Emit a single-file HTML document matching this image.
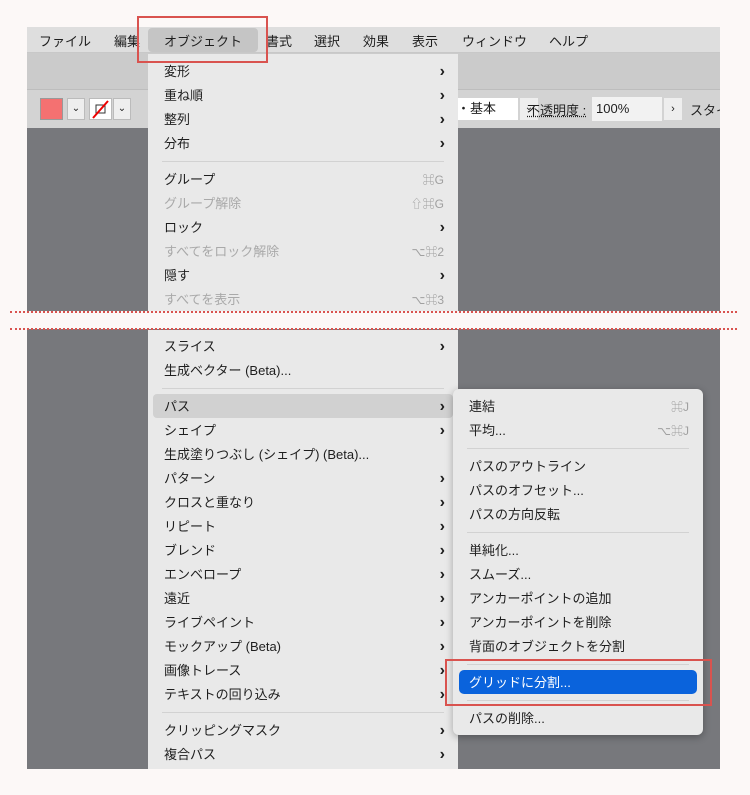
<!DOCTYPE html>
<html><head><meta charset="utf-8"><style>
*{margin:0;padding:0;box-sizing:border-box}
body{width:750px;height:795px;background:#fcf8f7;position:relative;overflow:hidden;font-family:"Liberation Sans","Noto Sans CJK JP",sans-serif;font-size:13px;color:#1e1e1e}
.a{position:absolute;white-space:nowrap}
.mb{left:27px;top:27px;width:693px;height:26px;background:#dedede;border-bottom:1px solid #c8c8c8}
.mb span{position:absolute;top:4px;font-size:13px}
.tb{left:27px;top:53px;width:693px;height:37px;background:#cbcbcb;border-bottom:1px solid #bdbdbd}
.cb{left:27px;top:90px;width:693px;height:38px;background:#d3d3d3;overflow:hidden}
.cv{left:27px;top:128px;width:693px;height:183px;background:#77787c}
.cv2{left:27px;top:329px;width:693px;height:440px;background:#77787c}
.menu{background:#e9e9e9;}
.it{position:absolute;left:16px;font-size:13px;line-height:24px;height:24px;white-space:nowrap;margin-top:1px}
.dis{color:#a9a9a9}
.ar{position:absolute;right:13px;font-size:16px;line-height:24px;font-weight:bold;margin-top:1px}
.sc{position:absolute;right:14px;font-size:12px;line-height:24px;color:#a0a0a0;margin-top:1px}
.sep{position:absolute;left:14px;right:14px;height:1px;background:#d2d2d2}
.dot{left:10px;width:727px;height:0;border-top:2px dotted #d9534f}
</style></head><body>
<div class="a mb">
<span style="left:12px">ファイル</span><span style="left:87px">編集</span>
<div class="a" style="left:121px;top:1px;width:110px;height:24px;background:#c5c5c5;border-radius:4px"></div>
<span style="left:137px">オブジェクト</span><span style="left:239px">書式</span><span style="left:287px">選択</span><span style="left:336px">効果</span><span style="left:385px">表示</span><span style="left:435px">ウィンドウ</span><span style="left:522px">ヘルプ</span>
</div>
<div class="a tb"></div>
<div class="a cb">
<div class="a" style="left:13px;top:8px;width:23px;height:22px;background:#f47171;border:1px solid #999"></div>
<div class="a" style="left:40px;top:8px;width:18px;height:22px;background:#eee;border:1px solid #bbb;font-size:10px;text-align:center;line-height:20px">⌄</div>
<div class="a" style="left:62px;top:8px;width:23px;height:22px;background:#fff;border:1px solid #bbb"><svg width="21" height="20"><rect x="6" y="6" width="9" height="8" fill="none" stroke="#333"/><line x1="3" y1="19" x2="18" y2="2" stroke="#e00" stroke-width="2"/></svg></div>
<div class="a" style="left:86px;top:8px;width:18px;height:22px;background:#eee;border:1px solid #bbb;font-size:10px;text-align:center;line-height:20px">⌄</div>
<div class="a" style="left:430px;top:8px;width:61px;height:22px;background:#fff;font-size:13px;line-height:22px">・基本</div>
<div class="a" style="left:493px;top:8px;width:18px;height:22px;background:#eee;font-size:10px;text-align:center;line-height:20px">⌄</div>
<div class="a" style="left:500px;top:10px;font-size:13px;text-decoration:underline dotted">不透明度 :</div>
<div class="a" style="left:565px;top:7px;width:70px;height:24px;background:#f2f2f2;font-size:13px;line-height:24px;padding-left:4px">100%</div>
<div class="a" style="left:637px;top:8px;width:18px;height:22px;background:#eee;font-size:11px;text-align:center;line-height:22px">›</div>
<div class="a" style="left:663px;top:10px;font-size:13px">スタイ</div>
</div>
<div class="a cv"></div>
<div class="a cv2"></div>
<div class="a dot" style="top:311px"></div>
<div class="a dot" style="top:328px"></div>

<div class="a menu" style="left:148px;top:54px;width:310px;height:257px">
<div class="it" style="top:5px">変形</div><div class="ar" style="top:5px">›</div>
<div class="it" style="top:29px">重ね順</div><div class="ar" style="top:29px">›</div>
<div class="it" style="top:53px">整列</div><div class="ar" style="top:53px">›</div>
<div class="it" style="top:77px">分布</div><div class="ar" style="top:77px">›</div>
<div class="sep" style="top:107px"></div>
<div class="it" style="top:113px">グループ</div><div class="sc" style="top:113px">⌘G</div>
<div class="it dis" style="top:137px">グループ解除</div><div class="sc" style="top:137px">⇧⌘G</div>
<div class="it" style="top:161px">ロック</div><div class="ar" style="top:161px">›</div>
<div class="it dis" style="top:185px">すべてをロック解除</div><div class="sc" style="top:185px">⌥⌘2</div>
<div class="it" style="top:209px">隠す</div><div class="ar" style="top:209px">›</div>
<div class="it dis" style="top:233px">すべてを表示</div><div class="sc" style="top:233px">⌥⌘3</div>
</div>
<div class="a menu" style="left:148px;top:330px;width:310px;height:439px">
<div class="it" style="top:4px">スライス</div><div class="ar" style="top:4px">›</div>
<div class="it" style="top:28px">生成ベクター (Beta)...</div>
<div class="sep" style="top:58px"></div>
<div class="a" style="left:5px;right:5px;top:64px;height:24px;background:#d1d1d1;border-radius:4px"></div>
<div class="it" style="top:64px">パス</div><div class="ar" style="top:64px">›</div>
<div class="it" style="top:88px">シェイプ</div><div class="ar" style="top:88px">›</div>
<div class="it" style="top:112px">生成塗りつぶし (シェイプ) (Beta)...</div>
<div class="it" style="top:136px">パターン</div><div class="ar" style="top:136px">›</div>
<div class="it" style="top:160px">クロスと重なり</div><div class="ar" style="top:160px">›</div>
<div class="it" style="top:184px">リピート</div><div class="ar" style="top:184px">›</div>
<div class="it" style="top:208px">ブレンド</div><div class="ar" style="top:208px">›</div>
<div class="it" style="top:232px">エンベロープ</div><div class="ar" style="top:232px">›</div>
<div class="it" style="top:256px">遠近</div><div class="ar" style="top:256px">›</div>
<div class="it" style="top:280px">ライブペイント</div><div class="ar" style="top:280px">›</div>
<div class="it" style="top:304px">モックアップ (Beta)</div><div class="ar" style="top:304px">›</div>
<div class="it" style="top:328px">画像トレース</div><div class="ar" style="top:328px">›</div>
<div class="it" style="top:352px">テキストの回り込み</div><div class="ar" style="top:352px">›</div>
<div class="sep" style="top:382px"></div>
<div class="it" style="top:388px">クリッピングマスク</div><div class="ar" style="top:388px">›</div>
<div class="it" style="top:412px">複合パス</div><div class="ar" style="top:412px">›</div>
</div>

<div class="a menu" style="left:453px;top:389px;width:250px;height:346px;border-radius:6px;box-shadow:0 2px 8px rgba(0,0,0,.3)">
<div class="it" style="top:5px">連結</div><div class="sc" style="top:5px">⌘J</div>
<div class="it" style="top:29px">平均...</div><div class="sc" style="top:29px">⌥⌘J</div>
<div class="sep" style="top:59px"></div>
<div class="it" style="top:65px">パスのアウトライン</div>
<div class="it" style="top:89px">パスのオフセット...</div>
<div class="it" style="top:113px">パスの方向反転</div>
<div class="sep" style="top:143px"></div>
<div class="it" style="top:149px">単純化...</div>
<div class="it" style="top:173px">スムーズ...</div>
<div class="it" style="top:197px">アンカーポイントの追加</div>
<div class="it" style="top:221px">アンカーポイントを削除</div>
<div class="it" style="top:245px">背面のオブジェクトを分割</div>
<div class="sep" style="top:275px"></div>
<div class="a" style="left:6px;right:6px;top:281px;height:24px;background:#0a63dc;border-radius:5px"></div>
<div class="it" style="top:281px;color:#fff">グリッドに分割...</div>
<div class="sep" style="top:311px"></div>
<div class="it" style="top:317px">パスの削除...</div>
</div>

<div class="a" style="left:137px;top:16px;width:131px;height:47px;border:2px solid #d9534f"></div>
<div class="a" style="left:445px;top:659px;width:267px;height:47px;border:2px solid #d9534f"></div>
</body></html>
